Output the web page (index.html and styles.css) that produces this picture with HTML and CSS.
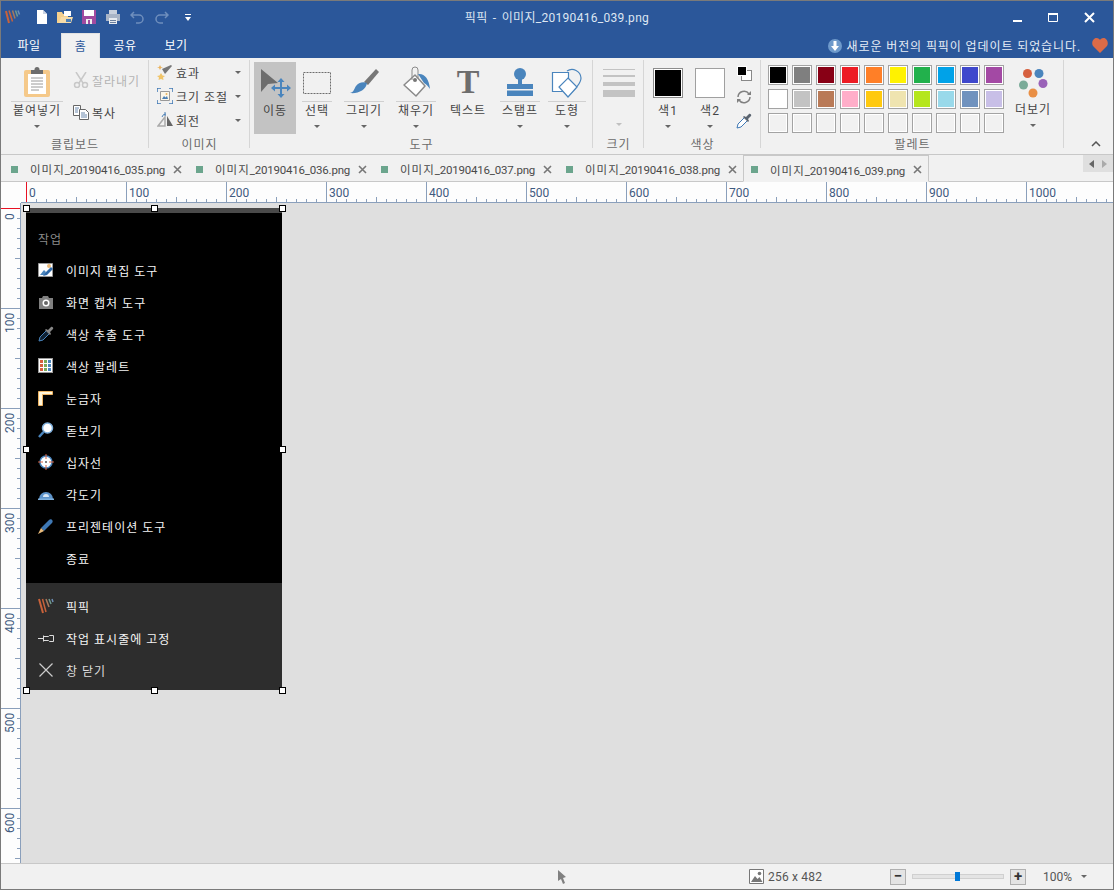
FILE: index.html
```html
<!DOCTYPE html>
<html lang="ko">
  <head>
    <meta charset="UTF-8" />
    <title>픽픽 - 이미지_20190416_039.png</title>
    <link rel="stylesheet" href="styles.css">
  </head>
  <body>
    <div class="window">
      <!-- title bar -->
      <div class="titlebar">
        <div class="qat">
          <svg class="logo" width="16" height="16" viewBox="0 0 16 16"><path d="M1 2l3 12" stroke="#c9623a" stroke-width="2"/><path d="M4 1.500l3.500 11" stroke="#c9623a" stroke-width="1.500"/><path d="M7.500 1.500l2.500 8" stroke="#a8795c" stroke-width="1.500"/><path d="M10.500 1.500l2 6" stroke="#6f9a8e" stroke-width="1.500"/><path d="M13 1.500l1.500 4" stroke="#6f8fb5" stroke-width="1.500"/></svg>
          <svg class="qat-new" width="12" height="14" viewBox="0 0 12 14"><path d="M1 0h6l4 4v10H1z" fill="#fff"/><path d="M7 0v4h4" fill="#c9d3e3"/></svg>
          <svg class="qat-open" width="16" height="14" viewBox="0 0 16 14"><path d="M0 2h5l1 2h5v9H0z" fill="#f5d08e"/><path d="M7 1h7v5H7z" fill="#fff"/><path d="M2 13l2-6h12l-2 6z" fill="#f7dca8"/><path d="M9 9h5v3H9z" fill="#4d80b8"/></svg>
          <svg class="qat-save" width="14" height="14" viewBox="0 0 14 14"><path d="M0 0h14v14H0z" fill="#a04ba0"/><path d="M2 0h10v6H2z" fill="#fff"/><path d="M4 9h6v5H4z" fill="#eee"/><path d="M6 10h2v4H6z" fill="#a04ba0"/></svg>
          <svg class="qat-print" width="14" height="14" viewBox="0 0 14 14"><path d="M3 0h8v4H3z" fill="#c9d0dc"/><path d="M0 4h14v7H0z" fill="#a9b4c6"/><path d="M3 8h8v6H3z" fill="#e8ebf0"/><path d="M4 10h6v1H4zM4 12h6v1H4z" fill="#6a7f9e"/></svg>
          <svg class="qat-undo" width="15" height="13" viewBox="0 0 15 13"><path d="M4 1L1 4l3 3M1 4h8a4 4 0 0 1 0 8H6" fill="none" stroke="#6f8fbd" stroke-width="1.500"/></svg>
          <svg class="qat-redo" width="15" height="13" viewBox="0 0 15 13"><path d="M11 1l3 3-3 3M14 4H6a4 4 0 0 0 0 8h3" fill="none" stroke="#6f8fbd" stroke-width="1.500"/></svg>
          <svg class="qat-more" width="6" height="7" viewBox="0 0 6 7"><path d="M0 0h6v1H0z" fill="#fff"/><path d="M0 3h6L3 7z" fill="#fff"/></svg>
        </div>
        <div class="title">픽픽 - 이미지_20190416_039.png</div>
        <div class="winbtns">
          <svg width="10" height="11" viewBox="0 0 10 11"><path d="M0 8h9v2H0z" fill="#fff"/></svg>
          <svg width="11" height="11" viewBox="0 0 11 11"><path d="M.5 1.500h9v8h-9z" fill="none" stroke="#fff"/><path d="M0 1h10v2H0z" fill="#fff"/></svg>
          <svg width="11" height="11" viewBox="0 0 11 11"><path d="M1 1l9 9M10 1l-9 9" stroke="#fff" stroke-width="2"/></svg>
        </div>
      </div>

      <div class="menubar">
        <a class="menu-item">파일</a>
        <a class="menu-item active">홈</a>
        <a class="menu-item share">공유</a>
        <a class="menu-item view">보기</a>
        <div class="notice">
          <svg width="14" height="14" viewBox="0 0 14 14"><circle cx="7" cy="7" r="7" fill="#6f9acb"/><path d="M5.500 2h3v5H11l-4 5-4-5h2.500z" fill="#fff"/></svg>
          <span>새로운 버전의 픽픽이 업데이트 되었습니다.</span>
          <svg class="heart" width="16" height="15" viewBox="0 0 16 15"><path d="M8 15L1 8C-1 5 1 0 4.500 0 6.500 0 7.500 1 8 2c.5-1 1.500-2 3.500-2C15 0 17 5 15 8z" fill="#dc6b47"/></svg>
        </div>
      </div>

      <!-- ribbon -->
      <div class="ribbon">
        <div class="group g-clip">
          <div class="group-body">
            <div class="big split b-paste">
              <svg width="26" height="30" viewBox="0 0 26 30"><rect y="3" width="26" height="27" rx="2" fill="#f5c98a"/><rect x="4" y="7" width="18" height="20" fill="#fff"/><path d="M7 11h12M7 14h12M7 17h12M7 20h12M7 23h8" stroke="#9a9a9a"/><path d="M7 3h12v4H7z" fill="#6d6d6d"/><circle cx="13" cy="2.500" r="2.500" fill="#6d6d6d"/></svg>
              <span class="big-label">붙여넣기</span>
              <i class="caret"></i>
            </div>
            <div class="clip-side">
              <div class="small disabled">
                <svg width="16" height="16" viewBox="0 0 16 16"><path d="M3 0l7 11M13 0L6 11" stroke="#c8c8c8" stroke-width="1.500"/><circle cx="4" cy="13" r="2.500" fill="none" stroke="#c8c8c8" stroke-width="1.500"/><circle cx="12" cy="13" r="2.500" fill="none" stroke="#c8c8c8" stroke-width="1.500"/></svg>
                <span>잘라내기</span>
              </div>
              <div class="small">
                <svg width="16" height="16" viewBox="0 0 16 16"><path d="M.5 1.500h7v10h-7z" fill="#fff" stroke="#666"/><path d="M6.500 5.500h6l3 3v7h-9z" fill="#fff" stroke="#666"/><path d="M2 4h4M2 6h3M2 8h3M8 9h4M8 11h6M8 13h6" stroke="#6a88ad"/></svg>
                <span>복사</span>
              </div>
            </div>
          </div>
          <div class="group-label">클립보드</div>
        </div>

        <div class="group g-image">
          <div class="group-body image-list">
            <div class="list-item">
              <svg width="16" height="16" viewBox="0 0 16 16"><path d="M5 5l9-4 1 1-7 8z" fill="#777"/><path d="M3 1l1 2 2 .5-2 .5-1 2-1-2-2-.5 2-.5z" fill="#eab35e"/><path d="M4 9l1.500 2.500 2.500.5-2 1.500.5 2.500L4 15l-2.500 1 .5-2.500L0 12l2.500-.5z" fill="#f0c468"/></svg>
              <span>효과</span><i class="caret"></i>
            </div>
            <div class="list-item">
              <svg width="16" height="16" viewBox="0 0 16 16"><path d="M3.500 3.500h9v9h-9z" fill="#fbf6e8" stroke="#999"/><path d="M5 11l2-3 1.500 1.500L10 8l1 3z" fill="#4a7fb5"/><circle cx="9.500" cy="6" r="1" fill="#e8b25e"/><path d="M0 4V0h4M12 0h4v4M16 12v4h-4M4 16H0v-4" fill="none" stroke="#3f78b4" stroke-width="1.500"/></svg>
              <span>크기 조절</span><i class="caret"></i>
            </div>
            <div class="list-item">
              <svg width="16" height="16" viewBox="0 0 16 16"><path d="M8 14H1l7-9z" fill="none" stroke="#aaa" stroke-width="1.500"/><path d="M10 4l6 10h-6z" fill="#666"/><path d="M5 5a4 4 0 0 1 4-3M8 0v4" fill="none" stroke="#4a7fb5"/></svg>
              <span>회전</span><i class="caret"></i>
            </div>
          </div>
          <div class="group-label">이미지</div>
        </div>

        <div class="group g-tools">
          <div class="group-body tools">
            <div class="big b-move selected">
              <svg width="32" height="32" viewBox="0 0 32 32"><path d="M2 3l17 14-10 1-7 8z" fill="#6d6d6d"/><path d="M22 12l3.500 4H23v5h5v-2.500l4 3.500-4 3.500V23h-5v5h2.500L22 32l-3.500-4H21v-5h-5v2.500L12 22l4-3.500V21h5v-5h-2.500z" fill="#4a85bd"/></svg>
              <span class="big-label">이동</span>
            </div>
            <div class="big split b-select">
              <svg width="30" height="30" viewBox="0 0 30 30"><path d="M1.500 5.500h27v21h-27z" fill="none" stroke="#6d6d6d" stroke-dasharray="2 1"/></svg>
              <span class="big-label">선택</span><i class="caret"></i>
            </div>
            <div class="big split b-draw">
              <svg width="32" height="30" viewBox="0 0 32 30"><path d="M16 15L28 2l3 3-11 13z" fill="#777"/><path d="M19 16c-1 7-9 11-17 10 4-1 4-4 6-7 2-3 7-5 11-3z" fill="#4a85bd"/></svg>
              <span class="big-label">그리기</span><i class="caret"></i>
            </div>
            <div class="big split b-fill">
              <svg width="32" height="32" viewBox="0 0 32 32"><path d="M15 9L25 20 16 30 4 19z" fill="#fff" stroke="#8a8a8a" stroke-width="1.500" stroke-linejoin="round"/><path d="M12 14V4a3 3 0 0 1 6 0v8" fill="none" stroke="#8a8a8a"/><circle cx="15" cy="14" r="2" fill="#777"/><path d="M18 8c6-1 11 4 12 15-2-3-4-5-6-6z" fill="#4a85bd"/></svg>
              <span class="big-label">채우기</span><i class="caret"></i>
            </div>
            <div class="big b-text">
              <span class="t-glyph">T</span>
              <span class="big-label">텍스트</span>
            </div>
            <div class="big split b-stamp">
              <svg width="30" height="30" viewBox="0 0 30 30"><circle cx="15" cy="7" r="6" fill="#4a85bd"/><path d="M13 11h4v7h-4z" fill="#4a85bd"/><path d="M2 17h26v5H2z" fill="#4a85bd"/><path d="M2 23.500h26V29H2z" fill="#4a85bd"/></svg>
              <span class="big-label">스탬프</span><i class="caret"></i>
            </div>
            <div class="big split b-shape">
              <svg width="32" height="32" viewBox="0 0 32 32"><path d="M16 5a9 9 0 0 1 14 7c0 5-5 10-13 18l-7-8" fill="none" stroke="#4a85bd" stroke-width="1.200"/><path d="M1.500 6.500h16v19h-16z" fill="#fff" stroke="#4a85bd" stroke-width="1.200"/><path d="M17 12l9 9-9 10-9-10z" fill="#fff" stroke="#4a85bd" stroke-width="1.200"/></svg>
              <span class="big-label">도형</span><i class="caret"></i>
            </div>
          </div>
          <div class="group-label">도구</div>
        </div>

        <div class="group g-size">
          <div class="group-body size-body">
            <div class="size-lines"><b class="l1"></b><b class="l2"></b><b class="l3"></b><b class="l4"></b></div>
            <i class="caret light"></i>
          </div>
          <div class="group-label">크기</div>
        </div>

        <div class="group g-color">
          <div class="group-body colors">
            <div class="big b-color">
              <div class="color-box black"></div>
              <span class="big-label">색1</span><i class="caret"></i>
            </div>
            <div class="big b-color">
              <div class="color-box white"></div>
              <span class="big-label">색2</span><i class="caret"></i>
            </div>
            <div class="color-tools">
              <div class="mini-swap"><span class="mini-back"></span><span class="mini-front"></span></div>
              <svg width="16" height="14" viewBox="0 0 16 14"><path d="M2 7a6 6 0 0 1 11-3M14 7a6 6 0 0 1-11 3" fill="none" stroke="#808080" stroke-width="1.500"/><path d="M11 5h4V1zM5 9H1v4z" fill="#808080"/></svg>
              <svg width="16" height="16" viewBox="0 0 16 16"><path d="M1 15l1-4 7-7 3 3-7 7z" fill="#fff" stroke="#3f78b4"/><path d="M8 3l2 1 3-3c1-1 3 1 2 2l-3 3 1 2-1 1-5-5z" fill="#5a6470"/></svg>
            </div>
          </div>
          <div class="group-label">색상</div>
        </div>

        <div class="group g-palette">
          <div class="group-body palette-body">
            <div class="palette">
              <span class="swatch c1"></span><span class="swatch c2"></span><span class="swatch c3"></span><span class="swatch c4"></span><span class="swatch c5"></span><span class="swatch c6"></span><span class="swatch c7"></span><span class="swatch c8"></span><span class="swatch c9"></span><span class="swatch c10"></span>
              <span class="swatch c11"></span><span class="swatch c12"></span><span class="swatch c13"></span><span class="swatch c14"></span><span class="swatch c15"></span><span class="swatch c16"></span><span class="swatch c17"></span><span class="swatch c18"></span><span class="swatch c19"></span><span class="swatch c20"></span>
              <span class="swatch"></span><span class="swatch"></span><span class="swatch"></span><span class="swatch"></span><span class="swatch"></span><span class="swatch"></span><span class="swatch"></span><span class="swatch"></span><span class="swatch"></span><span class="swatch"></span>
            </div>
            <div class="big b-more">
              <svg width="32" height="32" viewBox="0 0 32 32"><circle cx="10.500" cy="5.500" r="4.500" fill="#d6603f"/><circle cx="22" cy="5.500" r="4.500" fill="#4a85bd"/><circle cx="6.500" cy="17" r="4.500" fill="#7aab99"/><circle cx="26" cy="15.500" r="4.500" fill="#9a62b8"/><circle cx="16" cy="25" r="4.500" fill="#e98f45"/></svg>
              <span class="big-label">더보기</span><i class="caret"></i>
            </div>
          </div>
          <div class="group-label">팔레트</div>
        </div>

        <div class="collapse">
          <svg width="10" height="6" viewBox="0 0 10 6"><path d="M1 5l4-4 4 4" fill="none" stroke="#555" stroke-width="1.500"/></svg>
        </div>
      </div>

      <!-- document tabs -->
      <div class="doctabs">
        <div class="doctab"><i class="doc-mark"></i><span><em>이미지</em>_20190416_035.png</span><svg class="doc-x" width="9" height="9" viewBox="0 0 9 9"><path d="M1 1l7 7M8 1L1 8" stroke="#777" stroke-width="1.600"/></svg></div>
        <div class="doctab"><i class="doc-mark"></i><span><em>이미지</em>_20190416_036.png</span><svg class="doc-x" width="9" height="9" viewBox="0 0 9 9"><path d="M1 1l7 7M8 1L1 8" stroke="#777" stroke-width="1.600"/></svg></div>
        <div class="doctab"><i class="doc-mark"></i><span><em>이미지</em>_20190416_037.png</span><svg class="doc-x" width="9" height="9" viewBox="0 0 9 9"><path d="M1 1l7 7M8 1L1 8" stroke="#777" stroke-width="1.600"/></svg></div>
        <div class="doctab"><i class="doc-mark"></i><span><em>이미지</em>_20190416_038.png</span><svg class="doc-x" width="9" height="9" viewBox="0 0 9 9"><path d="M1 1l7 7M8 1L1 8" stroke="#777" stroke-width="1.600"/></svg></div>
        <div class="doctab current"><i class="doc-mark"></i><span><em>이미지</em>_20190416_039.png</span><svg class="doc-x" width="9" height="9" viewBox="0 0 9 9"><path d="M1 1l7 7M8 1L1 8" stroke="#777" stroke-width="1.600"/></svg></div>
        <div class="tab-scroll">
          <svg width="6" height="8" viewBox="0 0 6 8"><path d="M5 0v8L0 4z" fill="#666"/></svg>
          <svg width="6" height="8" viewBox="0 0 6 8"><path d="M1 0v8l5-4z" fill="#aaa"/></svg>
        </div>
      </div>

      <!-- rulers + canvas -->
      <div class="workspace">
        <div class="corner"></div>
        <div class="ruler-h">
          <span>0</span><span>100</span><span>200</span><span>300</span><span>400</span><span>500</span><span>600</span><span>700</span><span>800</span><span>900</span><span>1000</span>
        </div>
        <div class="ruler-v">
          <span>0</span><span>100</span><span>200</span><span>300</span><span>400</span><span>500</span><span>600</span>
        </div>
        <div class="canvas">
          <div class="shot">
            <div class="shot-top">
              <div class="shot-head">작업</div>
              <div class="row">
                <svg width="16" height="16" viewBox="0 0 16 16"><path d="M.5 1.500h14v13H.500z" fill="#fff" stroke="#999"/><path d="M2 13l4-5 2 2-2 3z" fill="#4a85bd"/><circle cx="11" cy="4" r="2" fill="#e8b97a"/><path d="M5 14l2-3 6-6 2 2-6 6z" fill="#2f69a8"/></svg>
                <span>이미지 편집 도구</span>
              </div>
              <div class="row">
                <svg width="16" height="16" viewBox="0 0 16 16"><path d="M1 4h3l1-2h5l1 2h4v11H1z" fill="#808080"/><circle cx="8" cy="9" r="3.500" fill="#fff"/><circle cx="8" cy="9" r="2" fill="#666"/></svg>
                <span>화면 캡처 도구</span>
              </div>
              <div class="row">
                <svg width="16" height="16" viewBox="0 0 16 16"><path d="M1 15l1-4 7-7 3 3-7 7z" fill="#123" stroke="#4a85bd"/><path d="M8 3l2 1 3-3c1-1 3 1 2 2l-3 3 1 2-1 1-5-5z" fill="#888"/></svg>
                <span>색상 추출 도구</span>
              </div>
              <div class="row">
                <svg width="16" height="16" viewBox="0 0 16 16"><path d="M0 0h15v15H0z" fill="#999"/><path d="M1 1h13v13H1z" fill="#fff"/><path d="M2 2h3v3H2zM2 6h3v3H2zM2 10h3v3H2z" fill="#d6603f"/><path d="M6 2h3v3H6zM6 6h3v3H6zM6 10h3v3H6z" fill="#7aab5a"/><path d="M10 2h3v3h-3zM10 6h3v3h-3zM10 10h3v3h-3z" fill="#4a85bd"/></svg>
                <span>색상 팔레트</span>
              </div>
              <div class="row">
                <svg width="16" height="16" viewBox="0 0 16 16"><path d="M.5 1.500h14v3h-10v11h-4z" fill="#fff6dc" stroke="#eeb463"/></svg>
                <span>눈금자</span>
              </div>
              <div class="row">
                <svg width="16" height="16" viewBox="0 0 16 16"><circle cx="9.500" cy="6" r="5" fill="#fff" stroke="#7fb0dd" stroke-width="1.500"/><path d="M1 15l4.500-5" stroke="#4a85bd" stroke-width="2.500"/></svg>
                <span>돋보기</span>
              </div>
              <div class="row">
                <svg width="16" height="16" viewBox="0 0 16 16"><circle cx="8" cy="8" r="6" fill="#fff" stroke="#4a85bd" stroke-width="1.500"/><path d="M8 0v5M8 11v5M0 8h5M11 8h5" stroke="#d6603f"/><circle cx="8" cy="8" r="1" fill="#555"/></svg>
                <span>십자선</span>
              </div>
              <div class="row">
                <svg width="16" height="16" viewBox="0 0 16 16"><path d="M1 13a7 7 0 0 1 14 0z" fill="#5d93ca"/><path d="M5 11a3 3 0 0 1 6 0z" fill="#d7e6f5"/><path d="M0 12.500h16V14H0z" fill="#7fb0dd"/></svg>
                <span>각도기</span>
              </div>
              <div class="row">
                <svg width="16" height="16" viewBox="0 0 16 16"><path d="M3 10l8-8c2-2 5 1 3 3l-8 8z" fill="#3f78b4"/><path d="M3 10l-3 6 6-3z" fill="#e8b97a"/></svg>
                <span>프리젠테이션 도구</span>
              </div>
              <div class="row no-icon">
                <span>종료</span>
              </div>
            </div>
            <div class="shot-bottom">
              <div class="row">
                <svg width="16" height="16" viewBox="0 0 16 16"><path d="M1 1l4 14" stroke="#c9623a" stroke-width="2"/><path d="M4.500 1l3.500 13" stroke="#c9623a" stroke-width="1.500"/><path d="M8 1l3 8" stroke="#a8795c" stroke-width="1.500"/><path d="M11 1l2 5" stroke="#6f9a8e" stroke-width="1.500"/><path d="M14 1l1 3" stroke="#6f8fb5" stroke-width="1.500"/></svg>
                <span>픽픽</span>
              </div>
              <div class="row">
                <svg width="16" height="16" viewBox="0 0 16 16"><path d="M0 8.500h5M5.500 5.500v6M5.500 6.500h5l1-1h4v6h-4l-1-1h-5" fill="none" stroke="#ddd"/></svg>
                <span>작업 표시줄에 고정</span>
              </div>
              <div class="row dim">
                <svg width="16" height="16" viewBox="0 0 16 16"><path d="M1.500 1.500l13 13M14.500 1.500l-13 13" stroke="#ccc" stroke-width="1.200"/></svg>
                <span>창 닫기</span>
              </div>
            </div>
            <i class="handle tl"></i><i class="handle tc"></i><i class="handle tr"></i>
            <i class="handle ml"></i><i class="handle mr"></i>
            <i class="handle bl"></i><i class="handle bc"></i><i class="handle br"></i>
          </div>
        </div>
      </div>

      <!-- status bar -->
      <div class="statusbar">
        <svg class="st-cursor" width="9" height="14" viewBox="0 0 9 14"><path d="M0 0l8 7-3 1 2 5-2 1-2-5-3 2z" fill="#808080"/></svg>
        <div class="st-size">
          <svg width="15" height="15" viewBox="0 0 15 15"><path d="M.5.5h14v14H.5z" fill="#fff" stroke="#777"/><circle cx="10.500" cy="4.500" r="1.800" fill="#777"/><path d="M2 13l4-6 2.500 3 2-2 3 5z" fill="#777"/></svg>
          <span>256 x 482</span>
        </div>
        <div class="zoom">
          <div class="zoom-btn">−</div>
          <div class="slider"><i class="thumb"></i></div>
          <div class="zoom-btn">+</div>
        </div>
        <div class="st-zoom"><span>100%</span><i class="caret"></i></div>
      </div>
    </div>
  </body>
</html>
```

FILE: styles.css
```css
* {
  box-sizing: border-box;
}

html,
body {
  margin: 0;
  height: 100%;
  overflow: hidden;
}

body {
  font-family: Roboto, "Noto Sans CJK KR", sans-serif;
  font-size: 12px;
  color: #444;
}

.window {
  width: 1114px;
  height: 890px;
  border: 1px solid #7a7a7a;
  background: #f1f1f1;
  display: flex;
  flex-direction: column;
}

/* title bar */
.titlebar {
  height: 32px;
  flex: none;
  background: #2b579a;
  color: #dde6f2;
  display: grid;
  grid-template-columns: 1fr auto 1fr;
  align-items: center;
}

.qat {
  display: flex;
  align-items: center;
  padding-left: 4px;
}

.qat-new { margin-left: 15px; }
.qat-open { margin-left: 9px; }
.qat-save { margin-left: 9px; }
.qat-print { margin-left: 10px; }
.qat-undo { margin-left: 10px; }
.qat-redo { margin-left: 9px; }
.qat-more { margin-left: 16px; }

.title {
  letter-spacing: .3px;
  word-spacing: 2px;
  padding-bottom: 1px;
}

.winbtns {
  display: flex;
  justify-content: flex-end;
  align-items: center;
  gap: 25px;
  padding-right: 18px;
}

.menubar {
  height: 25px;
  flex: none;
  background: #2b579a;
  display: flex;
  align-items: stretch;
  color: #fff;
  letter-spacing: .5px;
}

.menu-item {
  width: 40px;
  margin-left: 8px;
  text-align: center;
  line-height: 26px;
}

.menu-item.active {
  background: #f1f1f1;
  color: #2b579a;
  margin-left: 12px;
  width: 39px;
  border: 1px solid #e2e2e2;
  border-bottom: none;
}

.menu-item.share { margin-left: 5px; }
.menu-item.view { margin-left: 11px; }

.notice {
  margin-left: auto;
  display: flex;
  align-items: center;
  gap: 5px;
  color: #e6edf6;
  letter-spacing: .9px;
  padding-right: 5px;
}

.heart {
  margin-left: 6px;
}

/* ribbon */
.ribbon {
  height: 97px;
  flex: none;
  display: flex;
  border-bottom: 1px solid #c8c8c8;
  letter-spacing: 1px;
}

.group {
  position: relative;
  display: flex;
  flex-direction: column;
  flex: none;
}

.group::after {
  content: "";
  position: absolute;
  right: 0;
  top: 2px;
  bottom: 6px;
  width: 1px;
  background: #d6d6d6;
}

.group-body {
  flex: 1;
  display: flex;
}

.group-label {
  height: 20px;
  line-height: 22px;
  text-align: center;
  color: #6a6a6a;
}

.g-clip { width: 148px; }
.g-image { width: 101px; }
.g-tools { width: 343px; }
.g-size { width: 51px; }
.g-color { width: 117px; }
.g-palette { width: 303px; }

.big {
  display: flex;
  flex-direction: column;
  align-items: center;
  padding-top: 8px;
  flex: none;
}

.big > svg {
  height: 32px;
  flex: none;
}

.big-label {
  margin-top: 2px;
  height: 18px;
  line-height: 18px;
  white-space: nowrap;
}

.split .big-label {
  border-top: 1px solid #d0d0d0;
  padding-top: 0;
  margin-top: 3px;
  height: 19px;
  align-self: stretch;
  text-align: center;
}

.caret {
  display: block;
  width: 0;
  height: 0;
  margin-top: 5px;
  border-left: 3px solid transparent;
  border-right: 3px solid transparent;
  border-top: 3px solid #666;
}

.caret.light {
  border-top-color: #c0c0c0;
}

.b-paste {
  width: 52px;
  margin-left: 10px;
}

.clip-side {
  display: flex;
  flex-direction: column;
  gap: 16px;
  padding: 14px 0 0 10px;
}

.small {
  display: flex;
  align-items: center;
  gap: 3px;
  height: 16px;
  white-space: nowrap;
}

.small.disabled {
  color: #b4b4b4;
}

.image-list {
  flex-direction: column;
  padding: 2px 9px 0 8px;
}

.list-item {
  height: 24px;
  display: flex;
  align-items: center;
  gap: 3px;
}

.list-item .caret {
  margin: 0 0 0 auto;
}

.tools {
  padding: 4px 0 0 4px;
}

.tools .big {
  padding-top: 4px;
  height: 72px;
}

.tools .big > .big-label {
  margin-top: 4px;
}

.tools .split > .big-label {
  margin-top: 3px;
}

.selected {
  background: #c3c3c3;
}

.b-move { width: 42px; }
.b-select { width: 30px; margin-left: 6px; }
.b-draw { width: 40px; margin-left: 12px; }
.b-fill { width: 40px; margin-left: 12px; }
.b-text { width: 40px; margin-left: 12px; }
.b-stamp { width: 40px; margin-left: 12px; }
.b-shape { width: 38px; margin-left: 8px; }

.t-glyph {
  height: 32px;
  font-family: "Liberation Serif", serif;
  font-weight: bold;
  font-size: 34px;
  line-height: 32px;
  letter-spacing: 0;
  color: #6d6d6d;
}

.size-body {
  flex-direction: column;
  align-items: center;
  padding-top: 11px;
}

.size-lines {
  width: 32px;
  display: flex;
  flex-direction: column;
}

.size-lines b {
  display: block;
  background: #c3c3c3;
}

.size-lines .l1 { height: 1px; }
.size-lines .l2 { height: 2px; margin-top: 5px; }
.size-lines .l3 { height: 4px; margin-top: 5px; }
.size-lines .l4 { height: 7px; margin-top: 4px; }

.size-body .caret {
  margin-top: 26px;
}

.colors {
  padding-left: 9px;
  gap: 12px;
}

.b-color {
  width: 30px;
}

.color-box {
  width: 30px;
  height: 30px;
  flex: none;
  margin: 2px 0;
  border: 1px solid #8c8c8c;
}

.color-box.black {
  background: #000;
  box-shadow: inset 0 0 0 1px #fff;
}

.color-box.white {
  background: #fff;
  border-color: #a0a0a0;
}

.b-color .big-label {
  margin-top: 2px;
}

.color-tools {
  display: flex;
  flex-direction: column;
  align-items: center;
  gap: 9px;
  width: 20px;
  margin-left: -3px;
  padding-top: 8px;
}

.mini-swap {
  position: relative;
  width: 15px;
  height: 15px;
  flex: none;
}

.mini-back {
  position: absolute;
  right: 0;
  bottom: 0;
  width: 11px;
  height: 11px;
  background: #fff;
  border: 1px solid #888;
}

.mini-front {
  position: absolute;
  left: 0;
  top: 0;
  width: 10px;
  height: 10px;
  background: #000;
  border: 1px solid #fff;
}

.palette-body {
  padding: 7px 0 0 7px;
}

.palette {
  display: grid;
  grid-template-columns: repeat(10, 20px);
  grid-auto-rows: 20px;
  gap: 4px;
}

.swatch {
  display: block;
  border: 1px solid #a3a3a3;
  outline: 1px solid #fff;
  outline-offset: -2px;
  background: #f1f1f1;
}

.c1 { background: #000; }
.c2 { background: #7f7f7f; }
.c3 { background: #880015; }
.c4 { background: #ed1c24; }
.c5 { background: #ff7f27; }
.c6 { background: #fff200; }
.c7 { background: #22b14c; }
.c8 { background: #00a2e8; }
.c9 { background: #3f48cc; }
.c10 { background: #a349a4; }
.c11 { background: #fff; }
.c12 { background: #c3c3c3; }
.c13 { background: #b97a57; }
.c14 { background: #ffaec9; }
.c15 { background: #ffc90e; }
.c16 { background: #efe4b0; }
.c17 { background: #b5e61d; }
.c18 { background: #99d9ea; }
.c19 { background: #7092be; }
.c20 { background: #c8bfe7; }

.b-more {
  width: 48px;
  margin-left: 5px;
  padding-top: 3px;
}

.b-more .big-label {
  margin-top: 1px;
}

.collapse {
  flex: 1;
  display: flex;
  justify-content: center;
  align-items: flex-end;
  padding: 0 0 7px 14px;
}

/* document tabs */
.doctabs {
  height: 27px;
  flex: none;
  display: flex;
  border-bottom: 1px solid #c8c8c8;
  position: relative;
}

.doctab {
  width: 185px;
  display: flex;
  align-items: center;
  padding: 2px 0 0 10px;
  color: #4a4a4a;
  font-size: 11.5px;
  letter-spacing: -.2px;
  white-space: nowrap;
}

.doctab em {
  font-style: normal;
  letter-spacing: 1px;
}

.doc-mark {
  width: 7px;
  height: 7px;
  flex: none;
  margin-right: 12px;
  background: #6ba58d;
}

.doc-x {
  flex: none;
  margin-left: 8px;
}

.doctab.current {
  width: 186px;
  margin-left: 2px;
  padding-left: 7px;
  background: #f1f1f1;
  border: 1px solid #c8c8c8;
  border-bottom: 1px solid #f1f1f1;
  height: 27px;
}

.tab-scroll {
  margin-left: auto;
  width: 30px;
  height: 17px;
  background: #dfdfdf;
  display: flex;
  align-items: center;
  justify-content: space-around;
  padding: 0 3px;
}

/* rulers */
.workspace {
  flex: 1;
  min-height: 0;
  display: grid;
  grid-template-columns: 20px 1fr;
  grid-template-rows: 21px 1fr;
  background: #fff;
}

.corner {
  background: #fdfdfd;
}

.ruler-h {
  display: flex;
  overflow: hidden;
  padding-left: 5px;
  border-bottom: 1px solid #8a9fbb;
  background-color: #fdfdfd;
  background-image:
    linear-gradient(#e81123, #e81123),
    linear-gradient(to right, #8a9fbb 1px, transparent 1px),
    linear-gradient(to right, #8a9fbb 1px, transparent 1px),
    linear-gradient(to right, #8a9fbb 1px, transparent 1px);
  background-size: 1px 100%, 100px 100%, 50px 5px, 10px 3px;
  background-position: 5px 0, 5px 0, 5px bottom, 5px bottom;
  background-repeat: no-repeat, repeat-x, repeat-x, repeat-x;
}

.ruler-h span {
  flex: 0 0 100px;
  padding-left: 3px;
  line-height: 22px;
  color: #3f5a80;
}

.ruler-v {
  display: flex;
  flex-direction: column;
  overflow: hidden;
  padding-top: 5px;
  border-right: 1px solid #8a9fbb;
  background-color: #fdfdfd;
  background-image:
    linear-gradient(#e81123, #e81123),
    linear-gradient(#8a9fbb 1px, transparent 1px),
    linear-gradient(#8a9fbb 1px, transparent 1px),
    linear-gradient(#8a9fbb 1px, transparent 1px);
  background-size: 100% 1px, 100% 100px, 5px 50px, 3px 10px;
  background-position: 0 5px, 0 5px, right 5px, right 5px;
  background-repeat: no-repeat, repeat-y, repeat-y, repeat-y;
}

.ruler-v span {
  flex: 0 0 100px;
  display: block;
  writing-mode: vertical-rl;
  transform: rotate(180deg);
  text-align: right;
  padding-bottom: 5px;
  width: 18px;
  line-height: 18px;
  color: #3f5a80;
}

.canvas {
  background: #dfdfdf;
  padding: 5px;
  min-height: 0;
  overflow: hidden;
}

/* the captured image */
.shot {
  position: relative;
  width: 256px;
  height: 482px;
  border-top: 5px solid #4a4a4a;
  color: #f4f4f4;
  letter-spacing: 1px;
  display: flex;
  flex-direction: column;
}

.shot-top {
  height: 370px;
  background: #000;
}

.shot-bottom {
  flex: 1;
  background: #2d2d2d;
  padding-top: 7px;
}

.shot-head {
  height: 41px;
  padding: 19px 0 0 12px;
  color: #8a8a8a;
  line-height: 16px;
}

.row {
  height: 32px;
  display: flex;
  align-items: center;
  gap: 12px;
  padding-left: 12px;
}

.row.no-icon {
  padding-left: 40px;
}

.row.dim {
  color: #dedede;
}

.handle {
  position: absolute;
  width: 7px;
  height: 7px;
  background: #fff;
  border: 1px solid #000;
}

.tl, .tc, .tr { top: -8px; }
.ml, .mr { top: 233px; }
.bl, .bc, .br { bottom: -4px; }
.tl, .ml, .bl { left: -3px; }
.tc, .bc { left: 125px; }
.tr, .mr, .br { right: -4px; }

/* status bar */
.statusbar {
  height: 26px;
  flex: none;
  border-top: 1px solid #c8c8c8;
  display: flex;
  align-items: center;
  color: #555;
}

.st-cursor {
  margin-left: 557px;
}

.st-size {
  display: flex;
  align-items: center;
  gap: 4px;
  margin-left: 182px;
  width: 141px;
  letter-spacing: .2px;
}

.zoom {
  display: flex;
  align-items: center;
}

.zoom-btn {
  width: 16px;
  height: 16px;
  border: 1px solid #b0b0b0;
  background: #e4e4e4;
  color: #333;
  font-size: 15px;
  font-weight: bold;
  line-height: 13px;
  text-align: center;
}

.slider {
  position: relative;
  width: 92px;
  height: 5px;
  margin: 0 6px;
  background: #e4e4e4;
  border: 1px solid #d0d0d0;
}

.thumb {
  position: absolute;
  left: 42px;
  top: -3px;
  width: 5px;
  height: 9px;
  background: #0078d7;
}

.st-zoom {
  display: flex;
  align-items: center;
  gap: 9px;
  margin-left: 17px;
}

.st-zoom .caret {
  margin-top: 0;
}
```
